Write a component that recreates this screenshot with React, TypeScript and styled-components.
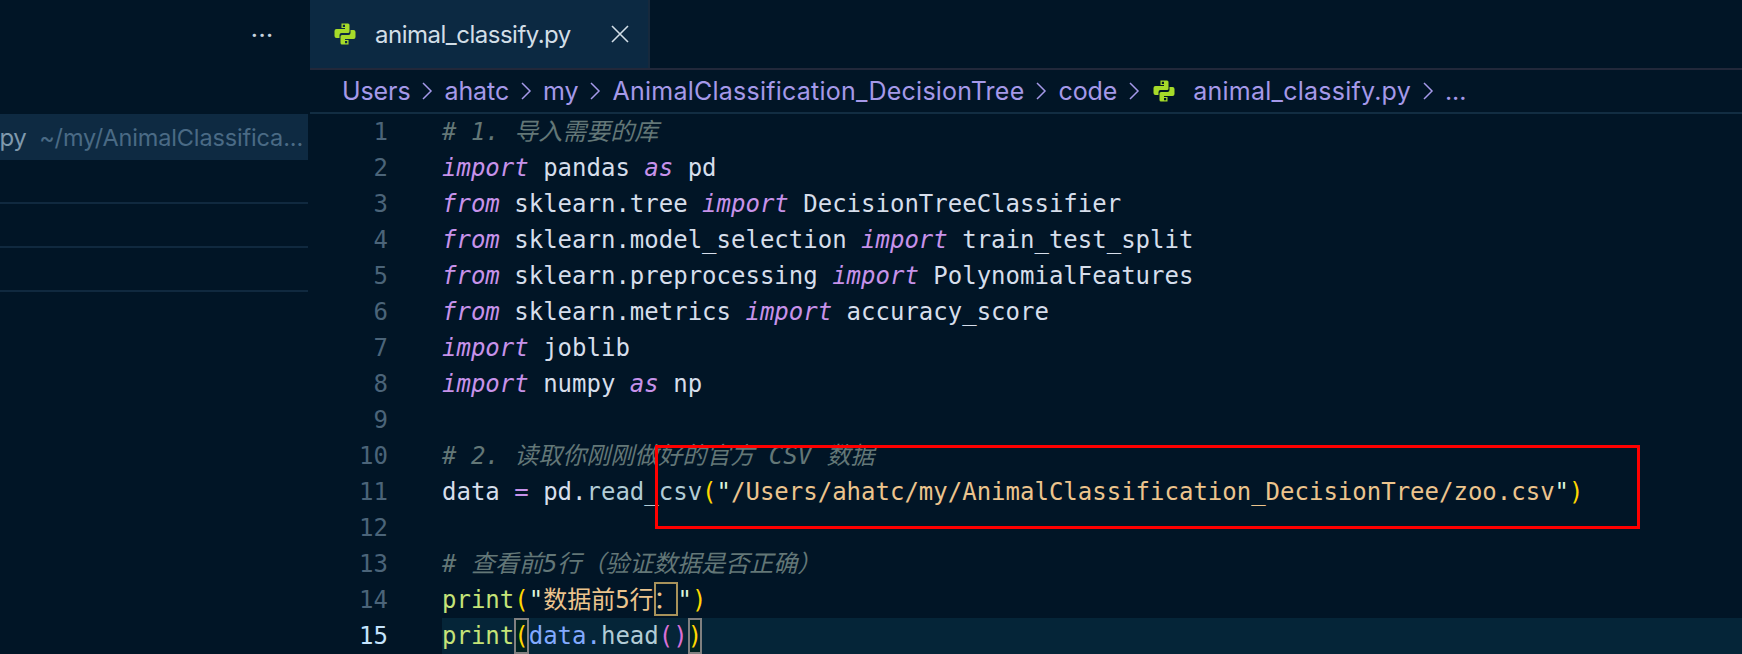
import React from 'react';
import styled, { createGlobalStyle } from 'styled-components';

const GlobalStyle = createGlobalStyle`
  html, body {
    margin: 0;
    padding: 0;
    background: #011526;
  }
  * {
    box-sizing: border-box;
  }
`;

const uiFont = `Inter, 'Noto Sans', sans-serif`;
const codeFont = `'DejaVu Sans Mono', 'Noto Sans CJK SC', monospace`;

const Window = styled.div`
  position: relative;
  display: flex;
  width: 1742px;
  height: 654px;
  overflow: hidden;
  background: #011526;
`;

const Sidebar = styled.aside`
  display: flex;
  flex-direction: column;
  flex: 0 0 310px;
  font-family: ${uiFont};
`;

const SidebarHeader = styled.div`
  display: flex;
  justify-content: flex-end;
  align-items: center;
  height: 70px;
  padding-right: 36px;
  color: #c5d2de;
  font-size: 20px;
  font-weight: 700;
  letter-spacing: 1px;
`;

const SidebarSpacer = styled.div`
  height: 44px;
`;

const OpenFile = styled.div`
  display: flex;
  justify-content: flex-end;
  align-items: center;
  gap: 13px;
  width: 308px;
  height: 46px;
  padding-right: 5px;
  overflow: hidden;
  background: #0e2a42;
  white-space: nowrap;
`;

const FileName = styled.span`
  color: #7f99ad;
  font-size: 24px;
  letter-spacing: -0.5px;
`;

const FilePath = styled.span`
  color: #4a6a85;
  font-size: 23.5px;
  letter-spacing: -0.15px;
`;

const EmptySection = styled.div`
  width: 308px;
  height: 44px;
  border-bottom: 2px solid #10293f;
`;

const Main = styled.main`
  display: flex;
  flex-direction: column;
  flex: 1;
  min-width: 0;
`;

const TabBar = styled.div`
  display: flex;
  height: 70px;
  border-bottom: 2px solid #22283a;
`;

const Tab = styled.div`
  display: flex;
  align-items: center;
  width: 340px;
  padding-left: 24px;
  background: #0c2942;
  border-right: 2px solid #16293d;
  font-family: ${uiFont};
`;

const TabLabel = styled.span`
  margin-left: 19px;
  color: #d2dee7;
  font-size: 24px;
  letter-spacing: -0.5px;
`;

const CloseIcon = styled.svg`
  width: 20px;
  height: 20px;
  margin-left: 39px;
  stroke: #d2dee7;
  stroke-width: 1.6;
`;

const Breadcrumbs = styled.nav`
  display: flex;
  align-items: center;
  height: 44px;
  padding: 0 0 0 32px;
  border-bottom: 2px solid #122d42;
  color: #a599e9;
  font-family: ${uiFont};
  font-size: 25px;
  letter-spacing: -0.1px;
  white-space: nowrap;
`;

const Crumb = styled.span<{ $wide?: boolean }>`
  letter-spacing: ${(p) => (p.$wide ? '0.24px' : '-0.1px')};
`;

const Chevron = styled.svg`
  width: 12px;
  height: 24px;
  margin: 0 11px;
  stroke: #a599e9;
  stroke-width: 1.5;
  fill: none;
`;

const CrumbIcon = styled.span`
  display: flex;
  margin: 0 18px 0 2px;
`;

const Editor = styled.div`
  flex: 1;
  font-family: ${codeFont};
  font-size: 24px;
  line-height: 36px;
  white-space: pre;
`;

const Line = styled.div`
  display: flex;
  height: 36px;
`;

const Gutter = styled.span<{ $active?: boolean }>`
  flex: 0 0 78px;
  text-align: right;
  color: ${(p) => (p.$active ? '#c5e4fd' : '#4b6479')};
`;

const LineCode = styled.code<{ $active?: boolean }>`
  flex: 1;
  margin-left: 54px;
  font: inherit;
  color: #d6deeb;
  background: ${(p) => (p.$active ? '#052538' : 'transparent')};
`;

const Comment = styled.span`
  color: #637777;
  font-style: italic;
`;

const Keyword = styled.span`
  color: #c792ea;
  font-style: italic;
`;

const Operator = styled.span`
  color: #c792ea;
`;

const Fn = styled.span`
  color: #c5e478;
`;

const Str = styled.span`
  color: #ecc48d;
`;

const Quote = styled.span`
  color: #d9f5dd;
`;

const Paren = styled.span<{ $pink?: boolean }>`
  color: ${(p) => (p.$pink ? '#da70d6' : '#ffd700')};
`;

const Prop = styled.span`
  color: #b2ccd6;
`;

const Variable = styled.span`
  color: #82aaff;
`;

const MatchedBracket = styled.span`
  display: inline-block;
  height: 36px;
  color: #ffd700;
  background: #012020;
  box-shadow: inset 0 0 0 2px #808080;
`;

const UnicodeMark = styled.span`
  display: inline-block;
  height: 34px;
  box-shadow: inset 0 0 0 2px #a8925a;
`;

const Annotation = styled.div`
  position: absolute;
  left: 655px;
  top: 445px;
  width: 985px;
  height: 84px;
  border: 3px solid #ff0000;
`;

const snakePath =
  'M7.5.5H14Q15.5.5 15.5 2V8.5Q15.5 10 14 10H7.5Q5.5 10 5.5 12V15H2.5Q.5 15 .5 13V8Q.5 6 2.5 6H11V5H7.5ZM8.8 1.7V3.9H11V1.7Z';

const PythonIcon: React.FC = () => (
  <svg width="22" height="22" viewBox="0 0 22 22" fill="#a6db29">
    <path fillRule="evenodd" d={snakePath} />
    <path transform="rotate(180 11 11)" fillRule="evenodd" d={snakePath} />
  </svg>
);

const Sep: React.FC = () => (
  <Chevron viewBox="0 0 12 24">
    <path d="M2 4l8 8-8 8" />
  </Chevron>
);

const App: React.FC = () => {
  return (
    <Window>
      <GlobalStyle />
      <Sidebar>
        <SidebarHeader>···</SidebarHeader>
        <SidebarSpacer />
        <OpenFile>
          <FileName>py</FileName>
          <FilePath>~/my/AnimalClassifica...</FilePath>
        </OpenFile>
        <EmptySection />
        <EmptySection />
        <EmptySection />
      </Sidebar>
      <Main>
        <TabBar>
          <Tab>
            <PythonIcon />
            <TabLabel>animal_classify.py</TabLabel>
            <CloseIcon viewBox="0 0 20 20">
              <path d="M2 2l16 16M18 2L2 18" />
            </CloseIcon>
          </Tab>
        </TabBar>
        <Breadcrumbs>
          <Crumb>Users</Crumb><Sep />
          <Crumb>ahatc</Crumb><Sep />
          <Crumb>my</Crumb><Sep />
          <Crumb $wide>AnimalClassification_DecisionTree</Crumb><Sep />
          <Crumb>code</Crumb><Sep />
          <CrumbIcon><PythonIcon /></CrumbIcon>
          <Crumb $wide>animal_classify.py</Crumb><Sep />
          <Crumb>...</Crumb>
        </Breadcrumbs>
        <Editor>
          <Line><Gutter>1</Gutter><LineCode><Comment># 1. 导入需要的库</Comment></LineCode></Line>
          <Line><Gutter>2</Gutter><LineCode><Keyword>import</Keyword> pandas <Keyword>as</Keyword> pd</LineCode></Line>
          <Line><Gutter>3</Gutter><LineCode><Keyword>from</Keyword> sklearn.tree <Keyword>import</Keyword> DecisionTreeClassifier</LineCode></Line>
          <Line><Gutter>4</Gutter><LineCode><Keyword>from</Keyword> sklearn.model_selection <Keyword>import</Keyword> train_test_split</LineCode></Line>
          <Line><Gutter>5</Gutter><LineCode><Keyword>from</Keyword> sklearn.preprocessing <Keyword>import</Keyword> PolynomialFeatures</LineCode></Line>
          <Line><Gutter>6</Gutter><LineCode><Keyword>from</Keyword> sklearn.metrics <Keyword>import</Keyword> accuracy_score</LineCode></Line>
          <Line><Gutter>7</Gutter><LineCode><Keyword>import</Keyword> joblib</LineCode></Line>
          <Line><Gutter>8</Gutter><LineCode><Keyword>import</Keyword> numpy <Keyword>as</Keyword> np</LineCode></Line>
          <Line><Gutter>9</Gutter><LineCode /></Line>
          <Line><Gutter>10</Gutter><LineCode><Comment># 2. 读取你刚刚做好的官方 CSV 数据</Comment></LineCode></Line>
          <Line><Gutter>11</Gutter><LineCode>data <Operator>=</Operator> pd.<Prop>read_csv</Prop><Paren>(</Paren><Quote>"</Quote><Str>/Users/ahatc/my/AnimalClassification_DecisionTree/zoo.csv</Str><Quote>"</Quote><Paren>)</Paren></LineCode></Line>
          <Line><Gutter>12</Gutter><LineCode /></Line>
          <Line><Gutter>13</Gutter><LineCode><Comment># 查看前5行（验证数据是否正确）</Comment></LineCode></Line>
          <Line><Gutter>14</Gutter><LineCode><Fn>print</Fn><Paren>(</Paren><Quote>"</Quote><Str>数据前5行<UnicodeMark>：</UnicodeMark></Str><Quote>"</Quote><Paren>)</Paren></LineCode></Line>
          <Line><Gutter $active>15</Gutter><LineCode $active><Fn>print</Fn><MatchedBracket>(</MatchedBracket><Variable>data.</Variable><Prop>head</Prop><Paren $pink>()</Paren><MatchedBracket>)</MatchedBracket></LineCode></Line>
        </Editor>
      </Main>
      <Annotation />
    </Window>
  );
};

export default App;
